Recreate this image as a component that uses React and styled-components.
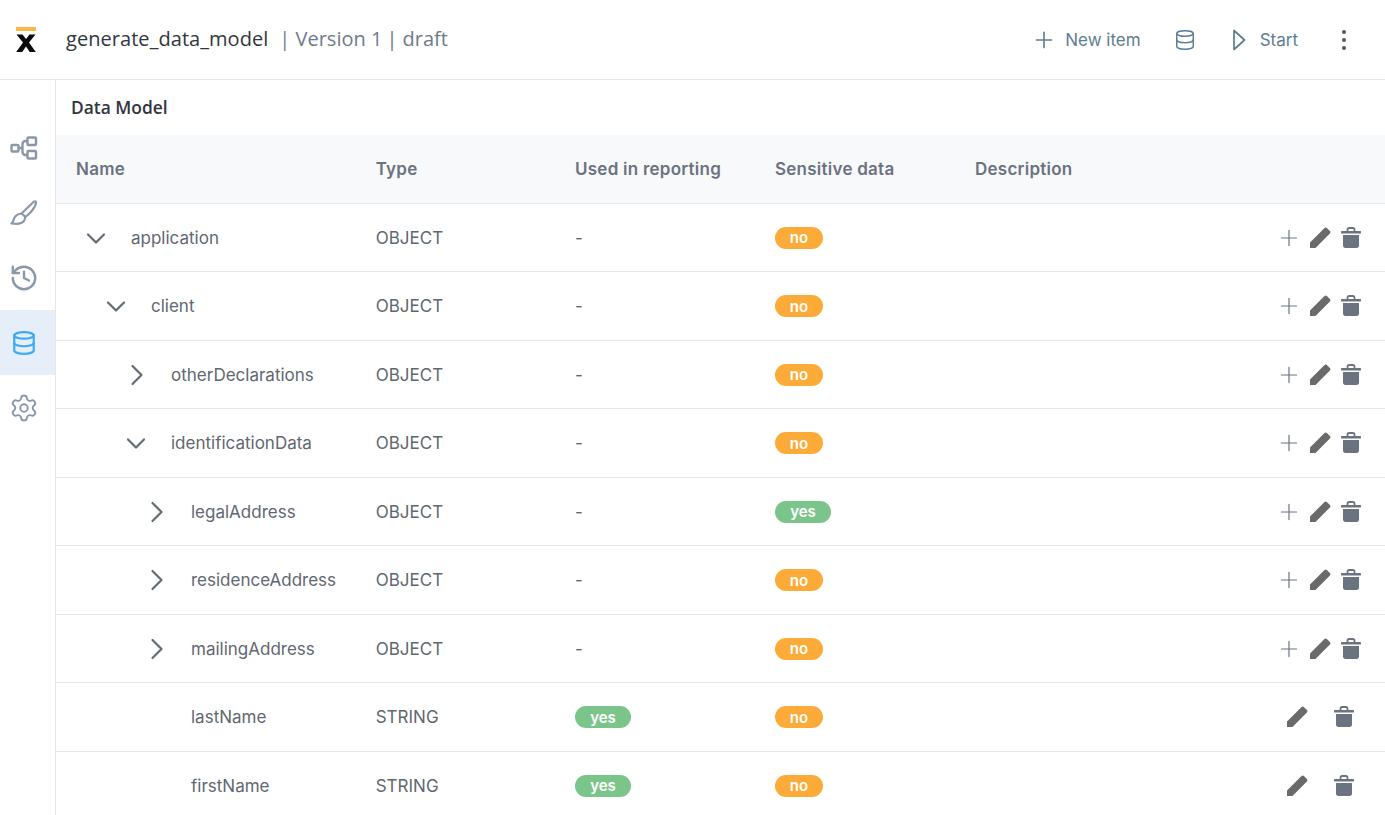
import React from "react";
import styled, { createGlobalStyle } from "styled-components";
import { Database, History, Plus, Settings } from "lucide-react";

const GlobalStyle = createGlobalStyle`
  html, body {
    margin: 0;
    padding: 0;
    height: 100%;
    overflow: hidden;
    background: #fff;
    font-family: "Open Sans", "Liberation Sans", sans-serif;
  }
`;

const rows = [
  { name: "application", depth: 0, arrow: "down", type: "OBJECT", reporting: null, sensitive: "no" },
  { name: "client", depth: 1, arrow: "down", type: "OBJECT", reporting: null, sensitive: "no" },
  { name: "otherDeclarations", depth: 2, arrow: "right", type: "OBJECT", reporting: null, sensitive: "no" },
  { name: "identificationData", depth: 2, arrow: "down", type: "OBJECT", reporting: null, sensitive: "no" },
  { name: "legalAddress", depth: 3, arrow: "right", type: "OBJECT", reporting: null, sensitive: "yes" },
  { name: "residenceAddress", depth: 3, arrow: "right", type: "OBJECT", reporting: null, sensitive: "no" },
  { name: "mailingAddress", depth: 3, arrow: "right", type: "OBJECT", reporting: null, sensitive: "no" },
  { name: "lastName", depth: 3, type: "STRING", reporting: "yes", sensitive: "no" },
  { name: "firstName", depth: 3, type: "STRING", reporting: "yes", sensitive: "no" },
];

const Logo = () => (
  <svg width="20" height="26" viewBox="0 0 20 26">
    <rect x="0" y="0" width="20" height="4" fill="#fcb644" />
    <path d="M0.5 7.5h6l3.5 4.6 3.5-4.6h6L13 15.6l6.8 9.4h-6L10 19.6 6.2 25h-6L7 15.6z" fill="#0b0b0b" />
  </svg>
);

const PlayOutline = () => (
  <svg width="14" height="22" viewBox="0 0 14 22" fill="none" stroke="#5f7d90" strokeWidth="1.7" strokeLinejoin="round">
    <path d="M2 1.500v19L12.500 11z" />
  </svg>
);

const Dots = () => (
  <svg width="6" height="22" viewBox="0 0 6 22" fill="#4c5a66">
    <circle cx="3" cy="3" r="2" />
    <circle cx="3" cy="11" r="2" />
    <circle cx="3" cy="19" r="2" />
  </svg>
);

const FlowIcon = () => (
  <svg width="28" height="26" viewBox="0 0 28 26" fill="none" stroke="#8b97a8" strokeWidth="2.4" strokeLinejoin="round">
    <rect x="1.500" y="10" width="7" height="6.500" rx="1" />
    <rect x="17.500" y="2.500" width="8.500" height="7.500" rx="1" />
    <rect x="17.500" y="16" width="8.500" height="7.500" rx="1" />
    <path d="M8.500 13h4M17.500 6h-2a3 3 0 0 0-3 3v8a3 3 0 0 0 3 3h2" />
  </svg>
);

const BrushIcon = () => (
  <svg width="30" height="30" viewBox="0 0 30 30" fill="none" stroke="#8b97a8" strokeWidth="2.200" strokeLinejoin="round" strokeLinecap="round">
    <path d="M12.500 15.500 24.500 4c1.600-1.200 3-.5 2.500 1.300-1 4-5.500 9.700-10.500 13.700z" />
    <path d="M12.500 15.500c-4 .5-7 2.800-7.800 6.200-.3 1.400-1 2.700-2.200 3.800 5 .7 11.300.2 13-3.500.7-1.300.8-2.400.5-3.500" />
  </svg>
);

const PenIcon = () => (
  <svg width="24" height="24" viewBox="0 0 24 24" fill="#6a6a6a">
    <path d="M2 22v-5.500L16.500 2c.7-.7 1.700-.7 2.400 0l3 3c.7.7.7 1.700 0 2.400L7.500 22z" />
  </svg>
);

const TrashIcon = () => (
  <svg width="22" height="22" viewBox="0 0 22 22">
    <path d="M7.500 4V2.800C7.500 1.800 8.200 1 9.200 1h3.600c1 0 1.700.8 1.700 1.800V4" fill="none" stroke="#6b7280" strokeWidth="1.800" />
    <rect x="1" y="4" width="20" height="2.400" rx="0.6" fill="#6b7280" />
    <path d="M3 8h16v10.500c0 1.400-1 2.500-2.400 2.500H5.400C4 21 3 19.900 3 18.500z" fill="#6b7280" />
  </svg>
);

const Chevron = ({ dir }) => (
  <svg width="22" height="22" viewBox="0 0 22 22" fill="none" stroke="#626b76" strokeWidth="2.200" strokeLinecap="round" strokeLinejoin="round">
    {dir === "down" ? <path d="M3 7.500l8 8 8-8" /> : <path d="M7.500 2l9 9-9 9" />}
  </svg>
);

export default function App() {
  return (
    <Page>
      <GlobalStyle />
      <Header>
        <LogoSlot>
          <Logo />
        </LogoSlot>
        <Title>generate_data_model</Title>
        <Meta>| Version 1</Meta>
        <Meta>| draft</Meta>
        <HeaderActions>
          <HeaderButton $gap={8}>
            <Plus size={26} strokeWidth={1.5} />
            New item
          </HeaderButton>
          <HeaderIcon>
            <Database size={22} strokeWidth={1.6} />
          </HeaderIcon>
          <HeaderButton $gap={14}>
            <PlayOutline />
            Start
          </HeaderButton>
          <MoreButton>
            <Dots />
          </MoreButton>
        </HeaderActions>
      </Header>
      <Body>
        <Sidebar>
          <NavItem>
            <FlowIcon />
          </NavItem>
          <NavItem>
            <BrushIcon />
          </NavItem>
          <NavItem>
            <History size={30} strokeWidth={1.9} />
          </NavItem>
          <NavItem $active>
            <Database size={26} strokeWidth={2} />
          </NavItem>
          <NavItem>
            <Settings size={30} strokeWidth={1.5} />
          </NavItem>
        </Sidebar>
        <Main>
          <Heading>Data Model</Heading>
          <HeadRow>
            <HeadCell>Name</HeadCell>
            <HeadCell>Type</HeadCell>
            <HeadCell>Used in reporting</HeadCell>
            <HeadCell>Sensitive data</HeadCell>
            <HeadCell>Description</HeadCell>
          </HeadRow>
          {rows.map((row) => (
            <Row key={row.name}>
              <NameCell $depth={row.depth}>
                <Arrow>{row.arrow && <Chevron dir={row.arrow} />}</Arrow>
                {row.name}
              </NameCell>
              <Cell>{row.type}</Cell>
              <Cell>{row.reporting ? <Badge $kind={row.reporting}>{row.reporting}</Badge> : "-"}</Cell>
              <Cell>
                <Badge $kind={row.sensitive}>{row.sensitive}</Badge>
              </Cell>
              <Cell />
              {row.arrow ? (
                <Actions>
                  <AddIcon size={26} strokeWidth={1.1} />
                  <PenIcon />
                  <TrashIcon />
                </Actions>
              ) : (
                <LeafActions>
                  <PenIcon />
                  <TrashIcon />
                </LeafActions>
              )}
            </Row>
          ))}
        </Main>
      </Body>
    </Page>
  );
}

const Page = styled.div`
  width: 1385px;
  height: 815px;
  display: flex;
  flex-direction: column;
  overflow: hidden;
`;

const Header = styled.header`
  height: 79px;
  flex: none;
  display: flex;
  align-items: center;
  border-bottom: 1px solid #e4e6e9;
  box-sizing: content-box;
`;

const LogoSlot = styled.div`
  width: 66px;
  padding-left: 16px;
  box-sizing: border-box;
  display: flex;
`;

const Title = styled.div`
  font-size: 20px;
  letter-spacing: 0.05px;
  color: #31363f;
  margin: 0 11px 2px 0;
`;

const Meta = styled.div`
  font-size: 20px;
  color: #6f7a8a;
  margin: 0 4px 2px 0;
`;

const HeaderActions = styled.div`
  margin-left: auto;
  display: flex;
  align-items: center;
  color: #5f7d90;
`;

const HeaderButton = styled.div`
  display: flex;
  align-items: center;
  gap: ${(p) => p.$gap}px;
  font-family: Inter, "Open Sans", sans-serif;
  font-size: 17px;
`;

const HeaderIcon = styled.div`
  display: flex;
  margin: 0 36px 0 33px;
`;

const MoreButton = styled.div`
  display: flex;
  margin: 0 38px 0 43px;
`;

const Body = styled.div`
  flex: 1;
  display: flex;
  min-height: 0;
`;

const Sidebar = styled.nav`
  width: 55px;
  flex: none;
  padding-top: 35px;
  border-right: 1px solid #e4e6e9;
`;

const NavItem = styled.div`
  height: 65px;
  display: flex;
  align-items: center;
  justify-content: center;
  padding-right: 7px;
  color: ${(p) => (p.$active ? "#3fa9f5" : "#8b97a8")};
  background: ${(p) => (p.$active ? "#e6eefa" : "transparent")};
`;

const Main = styled.main`
  flex: 1;
  min-width: 0;
  font-family: Inter, "Open Sans", sans-serif;
`;

const Heading = styled.h1`
  margin: 0;
  height: 55px;
  padding: 0 0 1px 15px;
  box-sizing: border-box;
  display: flex;
  align-items: center;
  font-family: "Open Sans", sans-serif;
  font-size: 17.4px;
  font-weight: 600;
  color: #31363f;
`;

const columns = "299.7px 199.3px 200px 200px 1fr 130px";

const HeadRow = styled.div`
  height: 68.5px;
  display: grid;
  grid-template-columns: ${columns};
  align-items: center;
  box-sizing: border-box;
  background: #f8f9fb;
  border-bottom: 1px solid #e4e6e9;
`;

const HeadCell = styled.div`
  padding-left: 20px;
  font-size: 17px;
  font-weight: 600;
  letter-spacing: 0.25px;
  color: #6b7280;
`;

const Row = styled.div`
  height: 68.5px;
  padding-top: 1px;
  display: grid;
  grid-template-columns: ${columns};
  align-items: center;
  box-sizing: border-box;
  border-bottom: 1px solid #e4e6e9;
`;

const Cell = styled.div`
  padding-left: 20px;
  font-size: 17px;
  color: #5f6771;
`;

const NameCell = styled(Cell)`
  display: flex;
  align-items: center;
  padding-left: ${(p) => 29 + p.$depth * 20}px;
`;

const Arrow = styled.span`
  width: 46px;
  flex: none;
  display: flex;
`;

const Badge = styled.span`
  display: inline-flex;
  align-items: center;
  justify-content: center;
  vertical-align: middle;
  height: 22px;
  width: ${(p) => (p.$kind === "yes" ? 56 : 48)}px;
  box-sizing: border-box;
  border-radius: 11px;
  font-size: 15px;
  font-weight: 600;
  color: #fff;
  background: ${(p) => (p.$kind === "yes" ? "#7cc58a" : "#fdab38")};
`;

const Actions = styled.div`
  display: flex;
  align-items: center;
  justify-content: flex-end;
  gap: 8px;
  padding-right: 23px;
`;

const LeafActions = styled(Actions)`
  gap: 24px;
  padding-right: 30px;
`;

const AddIcon = styled(Plus)`
  color: #6b7280;
  margin: 0 -2px 0 -2px;
`;
